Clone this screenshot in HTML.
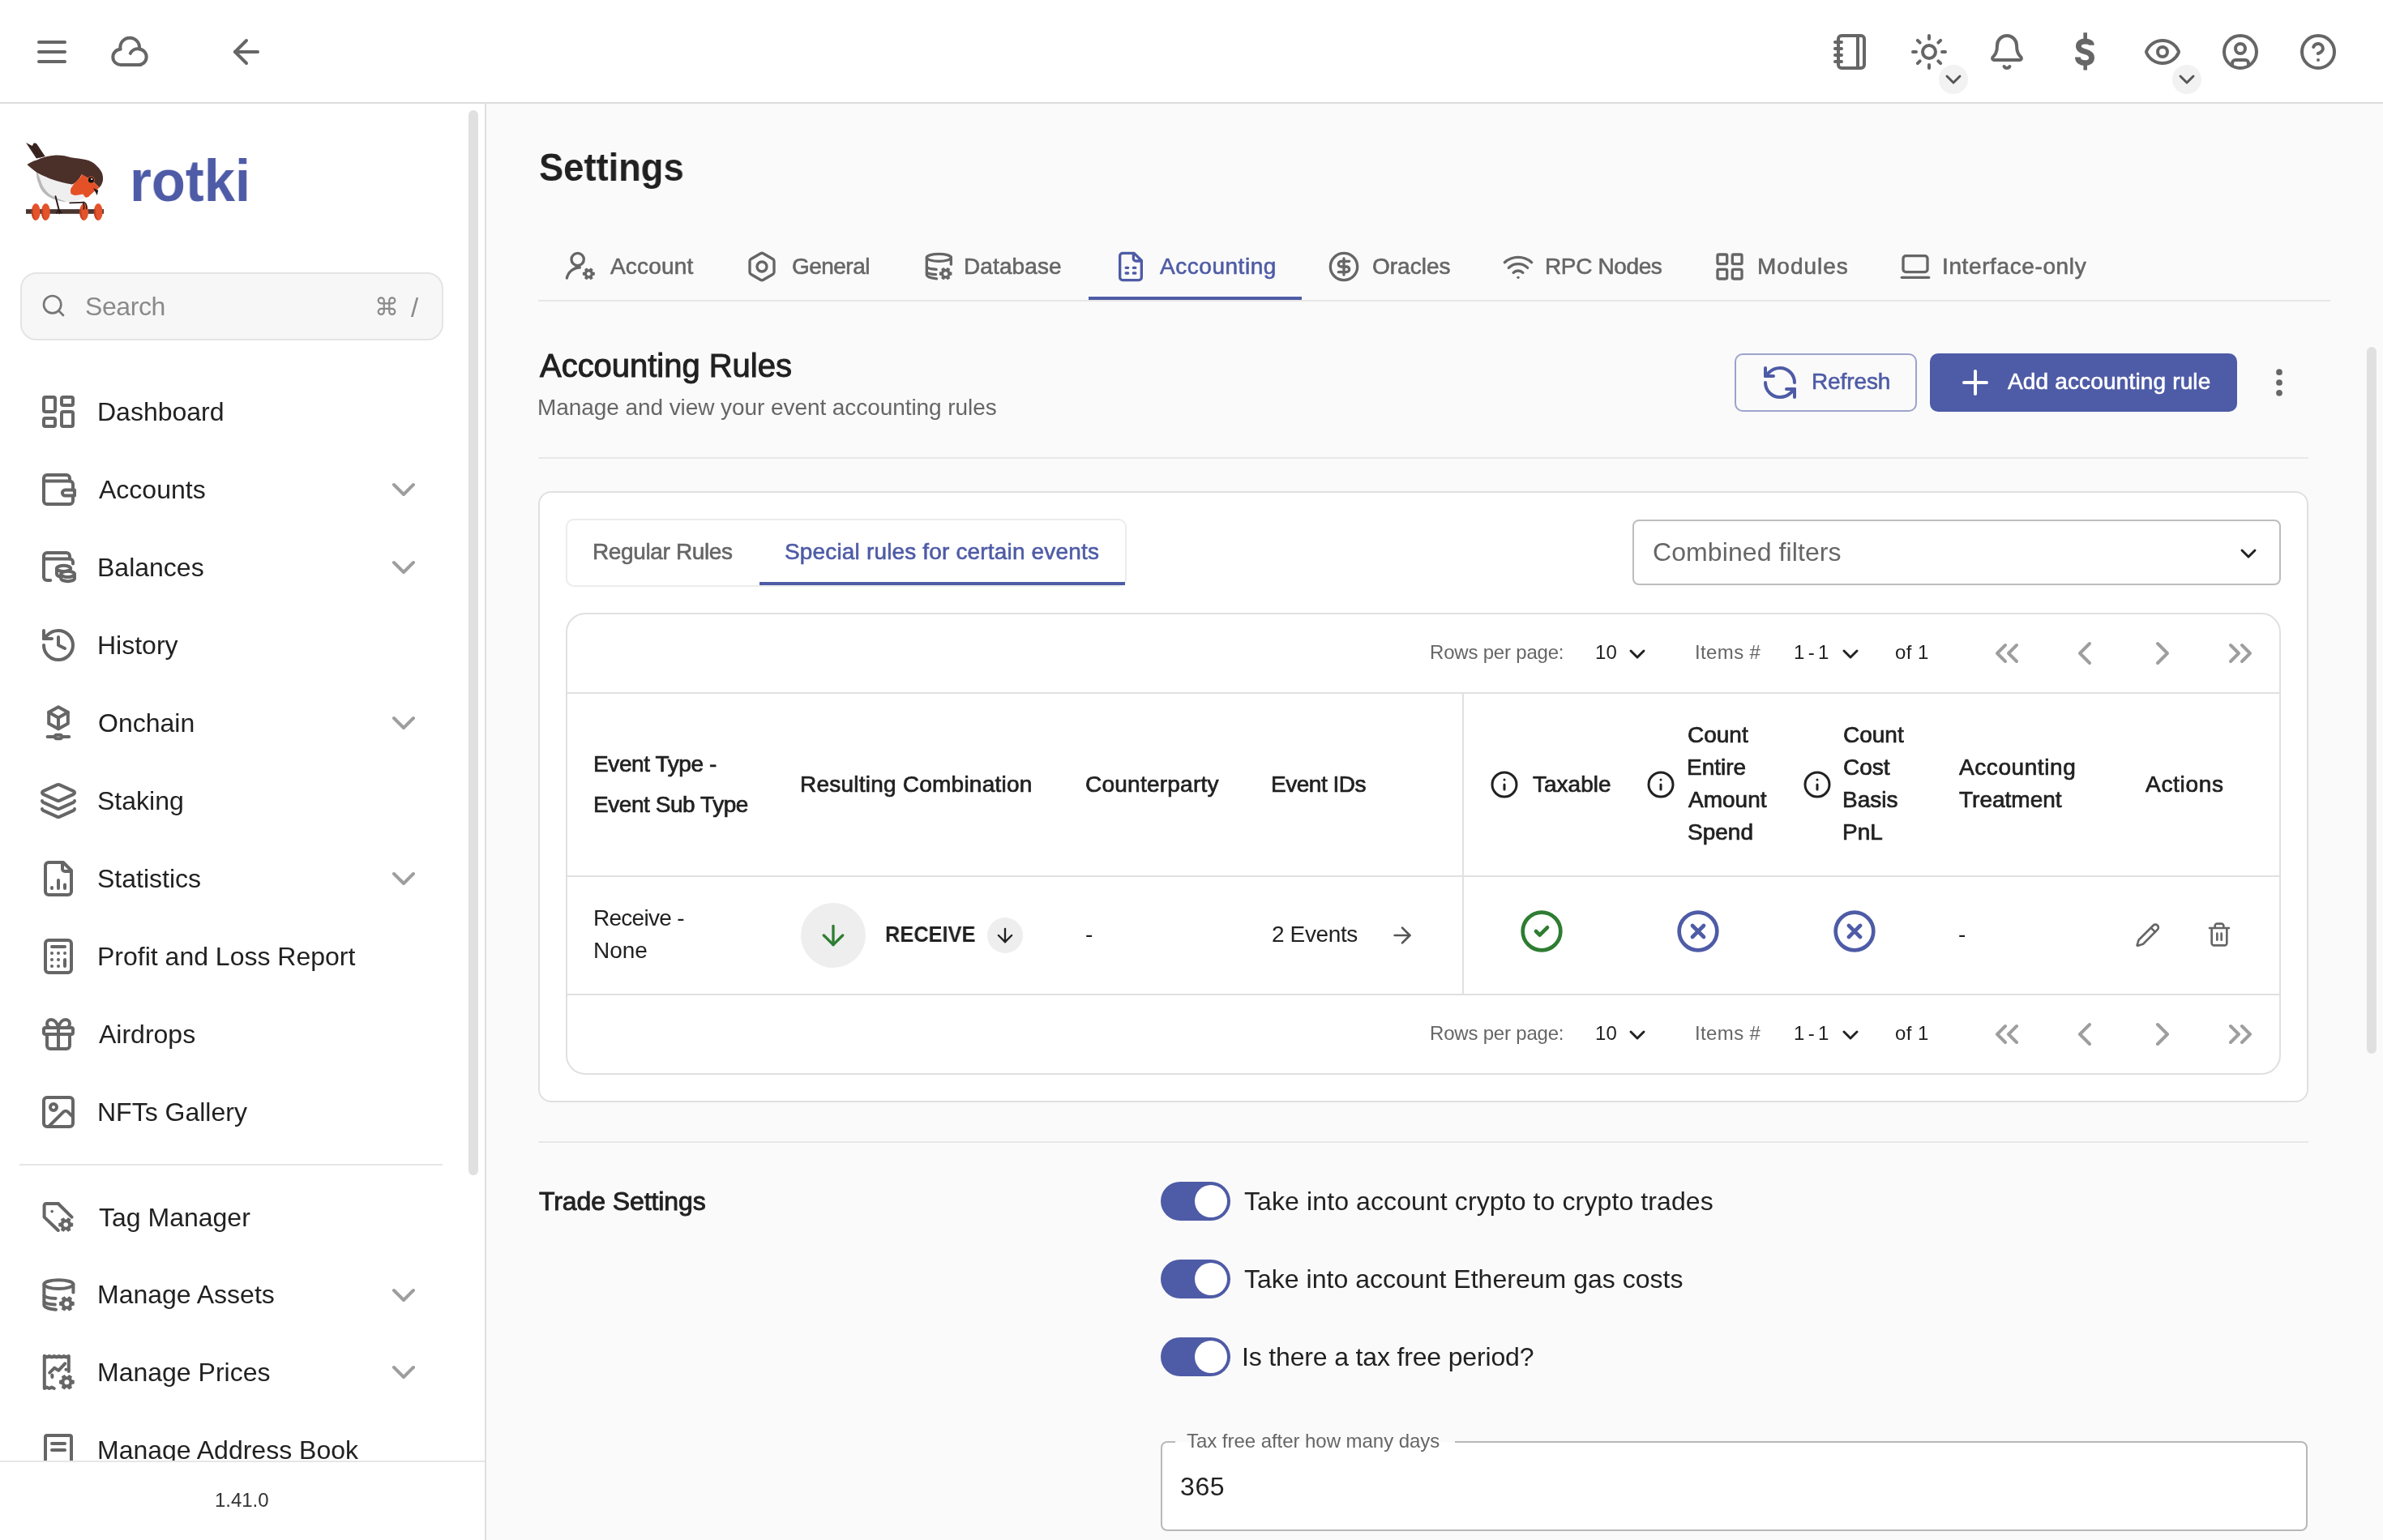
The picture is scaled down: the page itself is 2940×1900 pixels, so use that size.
<!DOCTYPE html>
<html><head><meta charset="utf-8"><title>rotki settings</title>
<style>
html,body{margin:0;padding:0;}
@media (min-width:2000px){html{zoom:2;}}
body{width:1470px;height:950px;overflow:hidden;position:relative;background:#fafafa;font-family:"Liberation Sans",sans-serif;}
.t{position:absolute;white-space:nowrap;line-height:1;will-change:transform;}
</style></head><body>
<div style="position:absolute;left:0px;top:0px;width:1470px;height:63px;background:#fff;"></div>
<div style="position:absolute;left:0px;top:63px;width:1470px;height:1px;background:#dddddd;"></div>
<svg width="24" height="24" viewBox="0 0 24 24" fill="none" stroke="#666" stroke-width="2" stroke-linecap="round" stroke-linejoin="round" style="position:absolute;left:20.00px;top:20.00px;color:#666;"><path d="M4 12h16M4 6h16M4 18h16"/></svg>
<svg width="24" height="24" viewBox="0 0 24 24" fill="none" stroke="#666" stroke-width="2" stroke-linecap="round" stroke-linejoin="round" style="position:absolute;left:68.00px;top:20.00px;color:#666;"><path d="M6.3 10.4A5.9 5.9 0 1 1 17.9 10.2A4.9 4.9 0 0 1 16.9 20H6.6A4.8 4.8 0 0 1 6.3 10.4Z"/><path d="M12.4 12.9A5 5 0 0 1 17.9 10.2"/></svg>
<svg width="24" height="24" viewBox="0 0 24 24" fill="none" stroke="#666" stroke-width="2" stroke-linecap="round" stroke-linejoin="round" style="position:absolute;left:140.00px;top:20.00px;color:#666;"><path d="m12 19-7-7 7-7"/><path d="M19 12H5"/></svg>
<svg width="24" height="24" viewBox="0 0 24 24" fill="none" stroke="#666" stroke-width="2" stroke-linecap="round" stroke-linejoin="round" style="position:absolute;left:1130.00px;top:20.00px;color:#666;"><path d="M2 6h4M2 10h4M2 14h4M2 18h4"/><rect width="16" height="20" x="4" y="2" rx="2"/><path d="M16 2v20"/></svg>
<svg width="24" height="24" viewBox="0 0 24 24" fill="none" stroke="#666" stroke-width="2" stroke-linecap="round" stroke-linejoin="round" style="position:absolute;left:1178.00px;top:20.00px;color:#666;"><circle cx="12" cy="12" r="4"/><path d="M12 2v2M12 20v2M4.93 4.93l1.41 1.41M17.66 17.66l1.41 1.41M2 12h2M20 12h2M6.34 17.66l-1.41 1.41M19.07 4.93l-1.41 1.41"/></svg>
<svg width="24" height="24" viewBox="0 0 24 24" fill="none" stroke="#666" stroke-width="2" stroke-linecap="round" stroke-linejoin="round" style="position:absolute;left:1226.00px;top:20.00px;color:#666;"><path d="M10.268 21a2 2 0 0 0 3.464 0"/><path d="M3.262 15.326A1 1 0 0 0 4 17h16a1 1 0 0 0 .74-1.673C19.41 13.956 18 12.499 18 8A6 6 0 0 0 6 8c0 4.499-1.411 5.956-2.738 7.326"/></svg>
<svg width="24" height="24" viewBox="0 0 24 24" fill="none" stroke="#666" stroke-width="2" stroke-linecap="round" stroke-linejoin="round" style="position:absolute;left:1322.00px;top:20.00px;color:#666;"><path d="M2.062 12.348a1 1 0 0 1 0-.696 10.75 10.75 0 0 1 19.876 0 1 1 0 0 1 0 .696 10.75 10.75 0 0 1-19.876 0"/><circle cx="12" cy="12" r="3"/></svg>
<svg width="24" height="24" viewBox="0 0 24 24" fill="none" stroke="#666" stroke-width="2" stroke-linecap="round" stroke-linejoin="round" style="position:absolute;left:1370.00px;top:20.00px;color:#666;"><circle cx="12" cy="12" r="10"/><circle cx="12" cy="10" r="3"/><path d="M7 20.662V19a2 2 0 0 1 2-2h6a2 2 0 0 1 2 2v1.662"/></svg>
<svg width="24" height="24" viewBox="0 0 24 24" fill="none" stroke="#666" stroke-width="2" stroke-linecap="round" stroke-linejoin="round" style="position:absolute;left:1418.00px;top:20.00px;color:#666;"><circle cx="12" cy="12" r="10"/><path d="M9.09 9a3 3 0 0 1 5.83 1c0 2-3 3-3 3"/><path d="M12 17h.01"/></svg>
<svg width="24" height="24" viewBox="0 0 24 24" fill="none" stroke="#666" stroke-width="2" stroke-linecap="round" stroke-linejoin="round" style="position:absolute;left:1274.00px;top:20.00px;color:#666;"><path d="M16.2 7.9C16.2 6.3 14.5 5.5 12.2 5.5 9.8 5.5 8.2 6.6 8.2 8.5 8.2 10.5 10 11.2 12.3 11.9 14.7 12.6 16.3 13.5 16.3 15.6 16.3 17.6 14.6 18.85 12.2 18.85 9.5 18.85 7.7 17.6 7.7 15.3" stroke-width="3.4" stroke-linecap="butt" stroke-linejoin="miter"/><path d="M12.35 0.1v5M12.35 18.5v4.7" stroke-width="2.3" stroke-linecap="butt"/></svg>
<div style="position:absolute;left:1196px;top:40px;width:18px;height:18px;background:#f2f2f2;border-radius:50%;"></div>
<svg width="16" height="16" viewBox="0 0 24 24" fill="none" stroke="#555" stroke-width="2.2" stroke-linecap="round" stroke-linejoin="round" style="position:absolute;left:1197.00px;top:41.00px;color:#555;"><path d="m6 9 6 6 6-6"/></svg>
<div style="position:absolute;left:1340px;top:40px;width:18px;height:18px;background:#f2f2f2;border-radius:50%;"></div>
<svg width="16" height="16" viewBox="0 0 24 24" fill="none" stroke="#555" stroke-width="2.2" stroke-linecap="round" stroke-linejoin="round" style="position:absolute;left:1341.00px;top:41.00px;color:#555;"><path d="m6 9 6 6 6-6"/></svg>
<div style="position:absolute;left:0px;top:64px;width:299px;height:886px;background:#fff;"></div>
<div style="position:absolute;left:299px;top:64px;width:1px;height:886px;background:#dfdfdf;"></div>
<svg width="48" height="48" viewBox="0 0 96 96" style="position:absolute;left:16px;top:88px">
<path d="M0 0 L7.8 4.1 L9.5 0.7 C11 0.3 12.5 0.8 13.5 1.8 L23.7 16.9 L12.9 19.6 Z" fill="#3a2420"/>
<path d="M7.8 4.1 L17.5 18.5" stroke="#2a1814" stroke-width="0.8"/>
<path d="M12.9 33.8 C13 42 14 47 15.6 50 C17 56 20 60 23 62.8 C27 66.5 30 68 33.8 69.6 C40 72 45 73 50 73 C55 73.2 60 72.5 63.5 71.6 C68 70.5 71 69 73.6 67.6 L70 45 Z" fill="#efefef"/>
<path d="M12.9 33.8 C13 42 14 47 15.6 50 C17 56 20 60 23 62.8 C27 66.5 30 68 33.8 69.6 C40 72 45 73 50 73 C45 71 38 69 33 66 C26 62 21 56 18.5 48 C16.5 42 14.5 37 12.9 33.8 Z" fill="#b9b9b9"/>
<path d="M1.4 27.1 C6 24 10 22 12.9 21.7 C20 18.5 28 16 36.5 15.6 C44 15.3 50 16.5 55.4 18.3 C62 19.5 68 19.8 73.6 21 C80 22.5 84 25 87.2 28.4 C91 32 94 36 94.6 39.9 C95.5 44 95 48 93.9 50 C93 52.5 92 54 90.5 55.4 L83.8 48.7 C80 44 78 43.5 75.7 43.3 C72 41 70 40 68.9 39.2 C66 44 62 50 56.8 51.4 C50 51 40 48 29.8 44.6 C22 41 16 38.5 12.9 36.5 C8 33 4 29.5 1.4 27.1 Z" fill="#4b302a"/>
<path d="M68.9 39.2 C72 40.5 74 42 75.7 43.3 C78 44 80 45.5 83.8 48.7 L90.5 55.4 C89 56.8 88 57.5 87.2 58.1 C83 61 80 64.5 77 66.9 C75.5 67.5 74.5 67.8 73.6 67.6 C72 66 71 64.5 70.3 63.5 C66 64.5 63 65 60.1 64.9 C58 64.5 56.5 64 55.4 62.8 C54.8 60 55 58 55.4 56.8 C57 54 58.5 51.5 60.1 50 C63 47 65.5 44 67.6 41.9 Z" fill="#e45127"/>
<circle cx="80.4" cy="46" r="4.4" fill="#e45127"/>
<circle cx="80.4" cy="46" r="3.5" fill="#111"/>
<circle cx="81.2" cy="45" r="1.1" fill="#fff"/>
<path d="M83.1 56.1 L89.2 58.8 L87.8 64.9 Z" fill="#1a1a1a"/>
<path d="M36.5 66.2 L40.6 82.4" stroke="#2f1f1b" stroke-width="2" fill="none" stroke-linecap="round"/>
<path d="M54.1 74.3 L71.6 73.6" stroke="#2f1f1b" stroke-width="1.7" fill="none" stroke-linecap="round"/>
<rect x="0" y="82.1" width="96" height="5.7" fill="#4a3631"/>
<ellipse cx="12.2" cy="85.5" rx="5.4" ry="10.5" fill="#e4532b"/>
<ellipse cx="24.4" cy="85.5" rx="5.4" ry="10.5" fill="#e4532b"/>
<ellipse cx="71.6" cy="85.5" rx="5.4" ry="10.5" fill="#e4532b"/>
<ellipse cx="89.2" cy="85.5" rx="5.4" ry="10.5" fill="#e4532b"/>
<path d="M7 82 C6.5 90 8.5 95 12.2 96 C9.5 93 8.5 88 9 82Z M19.2 82 C18.7 90 20.7 95 24.4 96 C21.7 93 20.7 88 21.2 82Z M66.4 82 C65.9 90 67.9 95 71.6 96 C68.9 93 67.9 88 68.4 82Z M84 82 C83.5 90 85.5 95 89.2 96 C86.5 93 85.5 88 86 82Z" fill="#bd3f1f"/>
<path d="M40.6 82.4 l-2.8 4.6 M40.6 82.4 l.6 5 M40.6 82.4 l3.2 4.4 M71.6 73.6 C74 74.5 75.3 77.5 74.6 81.5 M70.6 74.2 C72 77 72 79.5 71.2 82" stroke="#2a1a17" stroke-width="1.5" fill="none" stroke-linecap="round"/>
</svg>
<div style="position:absolute;left:12.5px;top:168px;width:261px;height:42px;box-sizing:border-box;background:#f7f7f7;border:1px solid #e4e4e4;border-radius:10px;"></div>
<svg width="16" height="16" viewBox="0 0 24 24" fill="none" stroke="#777" stroke-width="2" stroke-linecap="round" stroke-linejoin="round" style="position:absolute;left:25.00px;top:180.70px;color:#777;"><circle cx="11" cy="11" r="8"/><path d="m21 21-4.3-4.3"/></svg>
<div style="position:absolute;left:289px;top:68px;width:6px;height:657px;background:#e0e0e0;border-radius:3px;"></div>
<svg width="24" height="24" viewBox="0 0 24 24" fill="none" stroke="#666" stroke-width="2" stroke-linecap="round" stroke-linejoin="round" style="position:absolute;left:24.00px;top:242.00px;color:#666;"><rect width="7" height="9" x="3" y="3" rx="1"/><rect width="7" height="5" x="14" y="3" rx="1"/><rect width="7" height="9" x="14" y="12" rx="1"/><rect width="7" height="5" x="3" y="16" rx="1"/></svg>
<svg width="24" height="24" viewBox="0 0 24 24" fill="none" stroke="#666" stroke-width="2" stroke-linecap="round" stroke-linejoin="round" style="position:absolute;left:24.00px;top:290.00px;color:#666;"><path d="M3 6.7h16a2 2 0 0 1 2 2v3.6"/><path d="M21 15.8V19a2 2 0 0 1-2 2H5a2 2 0 0 1-2-2V5a2 2 0 0 1 2-2h12a2 2 0 0 1 2 2v1.7"/><path d="M16.2 12.3H22v3.5h-5.8a1.75 1.75 0 0 1 0-3.5z"/></svg>
<svg width="24" height="24" viewBox="0 0 24 24" fill="none" stroke="#9e9e9e" stroke-width="2" stroke-linecap="round" stroke-linejoin="round" style="position:absolute;left:237.00px;top:289.90px;color:#9e9e9e;"><path d="m6 9 6 6 6-6"/></svg>
<svg width="24" height="24" viewBox="0 0 24 24" fill="none" stroke="#666" stroke-width="2" stroke-linecap="round" stroke-linejoin="round" style="position:absolute;left:24.00px;top:338.00px;color:#666;"><path d="M3 6.7h16a2 2 0 0 1 2 2v1.1"/><path d="M19 6.7V5a2 2 0 0 0-2-2H5a2 2 0 0 0-2 2v13a2 2 0 0 0 2 2h2.1"/><ellipse cx="15.3" cy="12.7" rx="4.3" ry="1.8"/><path d="M11 12.7v3.3c0 .9 1.1 1.6 2.6 1.8"/><ellipse cx="17.8" cy="16.2" rx="4.2" ry="1.8"/><path d="M13.6 16.2v2.6c0 1.1 1.9 1.8 4.2 1.8s4.2-.7 4.2-1.8v-2.6"/></svg>
<svg width="24" height="24" viewBox="0 0 24 24" fill="none" stroke="#9e9e9e" stroke-width="2" stroke-linecap="round" stroke-linejoin="round" style="position:absolute;left:237.00px;top:337.90px;color:#9e9e9e;"><path d="m6 9 6 6 6-6"/></svg>
<svg width="24" height="24" viewBox="0 0 24 24" fill="none" stroke="#666" stroke-width="2" stroke-linecap="round" stroke-linejoin="round" style="position:absolute;left:24.00px;top:386.00px;color:#666;"><path d="M3 12a9 9 0 1 0 9-9 9.75 9.75 0 0 0-6.74 2.74L3 8"/><path d="M3 3v5h5"/><path d="M12 7v5l4 2"/></svg>
<svg width="24" height="24" viewBox="0 0 24 24" fill="none" stroke="#666" stroke-width="2" stroke-linecap="round" stroke-linejoin="round" style="position:absolute;left:24.00px;top:434.00px;color:#666;"><path d="M12 2.1 17.9 5.4v7L12 15.6 6.1 12.4v-7z"/><path d="M6.1 5.4 12 8.8l5.9-3.4M12 8.8v6.8"/><path d="M5.3 20.5H9.8M14.2 20.5H18.6"/><rect x="9.8" y="19.4" width="4.4" height="2.2" rx="1.1"/></svg>
<svg width="24" height="24" viewBox="0 0 24 24" fill="none" stroke="#9e9e9e" stroke-width="2" stroke-linecap="round" stroke-linejoin="round" style="position:absolute;left:237.00px;top:433.90px;color:#9e9e9e;"><path d="m6 9 6 6 6-6"/></svg>
<svg width="24" height="24" viewBox="0 0 24 24" fill="none" stroke="#666" stroke-width="2" stroke-linecap="round" stroke-linejoin="round" style="position:absolute;left:24.00px;top:482.00px;color:#666;"><path d="M12.83 2.18a2 2 0 0 0-1.66 0L2.6 6.08a1 1 0 0 0 0 1.83l8.58 3.91a2 2 0 0 0 1.66 0l8.58-3.9a1 1 0 0 0 0-1.83Z"/><path d="M2 12a1 1 0 0 0 .58.91l8.6 3.91a2 2 0 0 0 1.65 0l8.58-3.9A1 1 0 0 0 22 12"/><path d="M2 17a1 1 0 0 0 .58.91l8.6 3.91a2 2 0 0 0 1.65 0l8.58-3.9A1 1 0 0 0 22 17"/></svg>
<svg width="24" height="24" viewBox="0 0 24 24" fill="none" stroke="#666" stroke-width="2" stroke-linecap="round" stroke-linejoin="round" style="position:absolute;left:24.00px;top:530.00px;color:#666;"><path d="M15 2H6a2 2 0 0 0-2 2v16a2 2 0 0 0 2 2h12a2 2 0 0 0 2-2V7Z"/><path d="M14.5 2.5V6a1.5 1.5 0 0 0 1.5 1.5h3.5"/><path d="M8 18v-.5M12 18v-5M16 18v-2.3"/></svg>
<svg width="24" height="24" viewBox="0 0 24 24" fill="none" stroke="#9e9e9e" stroke-width="2" stroke-linecap="round" stroke-linejoin="round" style="position:absolute;left:237.00px;top:529.90px;color:#9e9e9e;"><path d="m6 9 6 6 6-6"/></svg>
<svg width="24" height="24" viewBox="0 0 24 24" fill="none" stroke="#666" stroke-width="2" stroke-linecap="round" stroke-linejoin="round" style="position:absolute;left:24.00px;top:578.00px;color:#666;"><rect width="16" height="20" x="4" y="2" rx="2"/><path d="M8 6h8M16 14v4M16 10h.01M12 10h.01M8 10h.01M12 14h.01M8 14h.01M12 18h.01M8 18h.01"/></svg>
<svg width="24" height="24" viewBox="0 0 24 24" fill="none" stroke="#666" stroke-width="2" stroke-linecap="round" stroke-linejoin="round" style="position:absolute;left:24.00px;top:626.00px;color:#666;"><rect x="3" y="8" width="18" height="4" rx="1"/><path d="M12 8v13"/><path d="M19 12v7a2 2 0 0 1-2 2H7a2 2 0 0 1-2-2v-7"/><path d="M7.5 8a2.5 2.5 0 0 1 0-5A4.8 8 0 0 1 12 8a4.8 8 0 0 1 4.5-5 2.5 2.5 0 0 1 0 5"/></svg>
<svg width="24" height="24" viewBox="0 0 24 24" fill="none" stroke="#666" stroke-width="2" stroke-linecap="round" stroke-linejoin="round" style="position:absolute;left:24.00px;top:674.00px;color:#666;"><rect width="18" height="18" x="3" y="3" rx="2"/><circle cx="9" cy="9" r="2"/><path d="m21 15-3.086-3.086a2 2 0 0 0-2.828 0L6 21"/></svg>
<div style="position:absolute;left:12px;top:718px;width:261px;height:1px;background:#e6e6e6;"></div>
<svg width="24" height="24" viewBox="0 0 24 24" fill="none" stroke="#666" stroke-width="2" stroke-linecap="round" stroke-linejoin="round" style="position:absolute;left:24.00px;top:739.40px;color:#666;"><path d="M11.9 3H4.5A1.2 1.2 0 0 0 3.3 4.2v7.1l8.6 8.2"/><path d="M11.9 3l8.4 8.3"/><circle cx="8.1" cy="7.8" r=".9" fill="currentColor" stroke="none"/><path d="M19.61 14.66 L21.08 14.97 L21.08 17.03 L19.61 17.34 L19.27 17.94 L19.74 19.36 L17.94 20.40 L16.94 19.28 L16.26 19.28 L15.26 20.40 L13.46 19.36 L13.93 17.94 L13.59 17.34 L12.12 17.03 L12.12 14.97 L13.59 14.66 L13.93 14.06 L13.46 12.64 L15.26 11.60 L16.26 12.72 L16.94 12.72 L17.94 11.60 L19.74 12.64 L19.27 14.06Z M18.00 16.00 A1.4 1.4 0 1 0 15.20 16.00 A1.4 1.4 0 1 0 18.00 16.00Z" fill="currentColor" fill-rule="evenodd" stroke="none"/></svg>
<svg width="24" height="24" viewBox="0 0 24 24" fill="none" stroke="#666" stroke-width="2" stroke-linecap="round" stroke-linejoin="round" style="position:absolute;left:24.00px;top:786.90px;color:#666;"><ellipse cx="12.2" cy="5.3" rx="9" ry="2.7"/><path d="M21.2 5.3v5"/><path d="M3.2 5.3V18c0 1.4 3 2.5 7.3 2.9"/><path d="M3.3 12.3c.6 .8 3.2 1.5 7 1.7"/><path d="M3.3 16.2c.6 .8 3.2 1.4 6.6 1.6"/><path d="M20.40 15.78 L21.88 16.12 L21.88 18.28 L20.40 18.62 L20.03 19.26 L20.47 20.71 L18.60 21.79 L17.57 20.68 L16.83 20.68 L15.80 21.79 L13.93 20.71 L14.37 19.26 L14.00 18.62 L12.52 18.28 L12.52 16.12 L14.00 15.78 L14.37 15.14 L13.93 13.69 L15.80 12.61 L16.83 13.72 L17.57 13.72 L18.60 12.61 L20.47 13.69 L20.03 15.14Z M18.70 17.20 A1.5 1.5 0 1 0 15.70 17.20 A1.5 1.5 0 1 0 18.70 17.20Z" fill="currentColor" fill-rule="evenodd" stroke="none"/></svg>
<svg width="24" height="24" viewBox="0 0 24 24" fill="none" stroke="#9e9e9e" stroke-width="2" stroke-linecap="round" stroke-linejoin="round" style="position:absolute;left:237.00px;top:786.80px;color:#9e9e9e;"><path d="m6 9 6 6 6-6"/></svg>
<svg width="24" height="24" viewBox="0 0 24 24" fill="none" stroke="#666" stroke-width="2" stroke-linecap="round" stroke-linejoin="round" style="position:absolute;left:24.00px;top:834.60px;color:#666;"><path d="M3.4 2v20l1.5-.7 1.5.7 1.5-.7 1.5.7"/><path d="M3.4 2l1.5.7 1.5-.7 1.5.7 1.5-.7 1.5.7 1.5-.7 1.5.7 1.5-.7 1.5.7 1.5-.7V11.5"/><path d="m6.6 12.3 3-3 2.5 1.6 4-4.2"/><path d="M16.7 10.4h.01M8.2 13.8v1.2"/><path d="M20.40 16.68 L21.88 17.02 L21.88 19.18 L20.40 19.52 L20.03 20.16 L20.47 21.61 L18.60 22.69 L17.57 21.58 L16.83 21.58 L15.80 22.69 L13.93 21.61 L14.37 20.16 L14.00 19.52 L12.52 19.18 L12.52 17.02 L14.00 16.68 L14.37 16.04 L13.93 14.59 L15.80 13.51 L16.83 14.62 L17.57 14.62 L18.60 13.51 L20.47 14.59 L20.03 16.04Z M18.70 18.10 A1.5 1.5 0 1 0 15.70 18.10 A1.5 1.5 0 1 0 18.70 18.10Z" fill="currentColor" fill-rule="evenodd" stroke="none"/></svg>
<svg width="24" height="24" viewBox="0 0 24 24" fill="none" stroke="#9e9e9e" stroke-width="2" stroke-linecap="round" stroke-linejoin="round" style="position:absolute;left:237.00px;top:834.50px;color:#9e9e9e;"><path d="m6 9 6 6 6-6"/></svg>
<svg width="24" height="24" viewBox="0 0 24 24" fill="none" stroke="#666" stroke-width="2" stroke-linecap="round" stroke-linejoin="round" style="position:absolute;left:24.00px;top:882.60px;color:#666;"><rect x="4" y="3" width="16" height="19" rx="1"/><path d="M8 8h8M8 12h8"/></svg>
<div style="position:absolute;left:0px;top:901px;width:299px;height:49px;background:#fff;border-top:1px solid #e6e6e6;box-sizing:border-box;z-index:5;"></div>
<div style="position:absolute;left:300px;top:64px;width:1170px;height:886px;background:#fafafa;"></div>
<div style="position:absolute;left:1460px;top:214px;width:6px;height:436px;background:#e0e0e0;border-radius:3px;"></div>
<div style="position:absolute;left:332px;top:185px;width:1105.5px;height:1px;background:#e6e6e6;"></div>
<div style="position:absolute;left:671.5px;top:183px;width:131.5px;height:2px;background:#4e5ba6;"></div>
<svg width="20" height="20" viewBox="0 0 24 24" fill="none" stroke="#666666" stroke-width="2" stroke-linecap="round" stroke-linejoin="round" style="position:absolute;left:348.00px;top:154.50px;color:#666666;"><circle cx="10" cy="6.6" r="4.6"/><path d="M2 20.5A10 10 0 0 1 11.6 12.6"/><path d="M21.21 15.96 L22.68 16.27 L22.68 18.33 L21.21 18.64 L20.87 19.24 L21.34 20.66 L19.54 21.70 L18.54 20.58 L17.86 20.58 L16.86 21.70 L15.06 20.66 L15.53 19.24 L15.19 18.64 L13.72 18.33 L13.72 16.27 L15.19 15.96 L15.53 15.36 L15.06 13.94 L16.86 12.90 L17.86 14.02 L18.54 14.02 L19.54 12.90 L21.34 13.94 L20.87 15.36Z M19.60 17.30 A1.4 1.4 0 1 0 16.80 17.30 A1.4 1.4 0 1 0 19.60 17.30Z" fill="currentColor" fill-rule="evenodd" stroke="none"/></svg>
<svg width="20" height="20" viewBox="0 0 24 24" fill="none" stroke="#666666" stroke-width="2" stroke-linecap="round" stroke-linejoin="round" style="position:absolute;left:460.00px;top:154.50px;color:#666666;"><path d="M21 16V8a2 2 0 0 0-1-1.73l-7-4a2 2 0 0 0-2 0l-7 4A2 2 0 0 0 3 8v8a2 2 0 0 0 1 1.73l7 4a2 2 0 0 0 2 0l7-4A2 2 0 0 0 21 16z"/><circle cx="12" cy="12" r="3.6"/></svg>
<svg width="20" height="20" viewBox="0 0 24 24" fill="none" stroke="#666666" stroke-width="2" stroke-linecap="round" stroke-linejoin="round" style="position:absolute;left:569.00px;top:154.50px;color:#666666;"><ellipse cx="12.2" cy="5.3" rx="9" ry="2.7"/><path d="M21.2 5.3v5"/><path d="M3.2 5.3V18c0 1.4 3 2.5 7.3 2.9"/><path d="M3.3 12.3c.6 .8 3.2 1.5 7 1.7"/><path d="M3.3 16.2c.6 .8 3.2 1.4 6.6 1.6"/><path d="M20.40 15.78 L21.88 16.12 L21.88 18.28 L20.40 18.62 L20.03 19.26 L20.47 20.71 L18.60 21.79 L17.57 20.68 L16.83 20.68 L15.80 21.79 L13.93 20.71 L14.37 19.26 L14.00 18.62 L12.52 18.28 L12.52 16.12 L14.00 15.78 L14.37 15.14 L13.93 13.69 L15.80 12.61 L16.83 13.72 L17.57 13.72 L18.60 12.61 L20.47 13.69 L20.03 15.14Z M18.70 17.20 A1.5 1.5 0 1 0 15.70 17.20 A1.5 1.5 0 1 0 18.70 17.20Z" fill="currentColor" fill-rule="evenodd" stroke="none"/></svg>
<svg width="20" height="20" viewBox="0 0 24 24" fill="none" stroke="#4e5ba6" stroke-width="2" stroke-linecap="round" stroke-linejoin="round" style="position:absolute;left:687.50px;top:154.50px;color:#4e5ba6;"><path d="M14.5 2H6a2 2 0 0 0-2 2v16a2 2 0 0 0 2 2h12a2 2 0 0 0 2-2V7.5Z"/><path d="M14 2.3v3.7a1.8 1.8 0 0 0 1.8 1.8h4"/><path d="M8.5 12.8h1.5M14 12.8h1.5M8.5 16.8h1.5M14 16.8h1.5"/></svg>
<svg width="20" height="20" viewBox="0 0 24 24" fill="none" stroke="#666666" stroke-width="2" stroke-linecap="round" stroke-linejoin="round" style="position:absolute;left:819.00px;top:154.50px;color:#666666;"><circle cx="12" cy="12" r="10"/><path d="M16 8h-6a2 2 0 1 0 0 4h4a2 2 0 1 1 0 4H8"/><path d="M12 18V6"/></svg>
<svg width="20" height="20" viewBox="0 0 24 24" fill="none" stroke="#666666" stroke-width="2" stroke-linecap="round" stroke-linejoin="round" style="position:absolute;left:926.50px;top:154.50px;color:#666666;"><path d="M12 20h.01"/><path d="M2 8.82a15 15 0 0 1 20 0"/><path d="M5 12.859a10 10 0 0 1 14 0"/><path d="M8.5 16.429a5 5 0 0 1 7 0"/></svg>
<svg width="20" height="20" viewBox="0 0 24 24" fill="none" stroke="#666666" stroke-width="2" stroke-linecap="round" stroke-linejoin="round" style="position:absolute;left:1057.00px;top:154.50px;color:#666666;"><rect width="7" height="7" x="3" y="3" rx="1"/><rect width="7" height="7" x="14" y="3" rx="1"/><rect width="7" height="7" x="14" y="14" rx="1"/><rect width="7" height="7" x="3" y="14" rx="1"/></svg>
<svg width="20" height="20" viewBox="0 0 24 24" fill="none" stroke="#666666" stroke-width="2" stroke-linecap="round" stroke-linejoin="round" style="position:absolute;left:1171.50px;top:154.50px;color:#666666;"><rect width="18" height="12" x="3" y="4" rx="2"/><path d="M2 20h20"/></svg>
<div style="position:absolute;left:1070px;top:218px;width:112.4px;height:36px;box-sizing:border-box;border:1px solid rgba(78,91,166,0.55);border-radius:5px;"></div>
<svg width="24" height="24" viewBox="0 0 24 24" fill="none" stroke="#4e5ba6" stroke-width="2" stroke-linecap="round" stroke-linejoin="round" style="position:absolute;left:1086.00px;top:224.00px;color:#4e5ba6;"><path d="M21 12a9 9 0 0 0-9-9 9.75 9.75 0 0 0-6.74 2.74L3 8"/><path d="M3 3v5h5"/><path d="M3 12a9 9 0 0 0 9 9 9.75 9.75 0 0 0 6.74-2.74L21 16"/><path d="M16 16h5v5"/></svg>
<div style="position:absolute;left:1190.5px;top:218px;width:189.5px;height:36px;background:#4e5ba6;border-radius:5px;"></div>
<svg width="24" height="24" viewBox="0 0 24 24" fill="none" stroke="#fff" stroke-width="2" stroke-linecap="round" stroke-linejoin="round" style="position:absolute;left:1206.50px;top:224.00px;color:#fff;"><path d="M5 12h14M12 5v14"/></svg>
<svg width="22" height="22" viewBox="0 0 24 24" fill="none" stroke="#666" stroke-width="2.2" stroke-linecap="round" stroke-linejoin="round" style="position:absolute;left:1395.00px;top:225.00px;color:#666;"><circle cx="12" cy="12" r="1"/><circle cx="12" cy="5" r="1"/><circle cx="12" cy="19" r="1"/></svg>
<div style="position:absolute;left:332px;top:282px;width:1092px;height:1px;background:#e8e8e8;"></div>
<div style="position:absolute;left:332px;top:303px;width:1092px;height:377px;box-sizing:border-box;background:#fff;border:1px solid #e0e0e0;border-radius:8px;"></div>
<div style="position:absolute;left:349px;top:320px;width:346px;height:42px;box-sizing:border-box;border:1px solid #ececec;border-radius:5px;"></div>
<div style="position:absolute;left:468.5px;top:359px;width:225.5px;height:2px;background:#4e5ba6;"></div>
<div style="position:absolute;left:1007px;top:320.5px;width:400px;height:40.5px;box-sizing:border-box;background:#fff;border:1px solid #bdbdbd;border-radius:4px;"></div>
<svg width="16" height="16" viewBox="0 0 24 24" fill="none" stroke="#212121" stroke-width="2.2" stroke-linecap="round" stroke-linejoin="round" style="position:absolute;left:1379.00px;top:333.50px;color:#212121;"><path d="m6 9 6 6 6-6"/></svg>
<div style="position:absolute;left:349px;top:378px;width:1058px;height:285px;box-sizing:border-box;background:#fff;border:1px solid #e0e0e0;border-radius:12px;"></div>
<svg width="16" height="16" viewBox="0 0 24 24" fill="none" stroke="#212121" stroke-width="2.2" stroke-linecap="round" stroke-linejoin="round" style="position:absolute;left:1002.00px;top:395.50px;color:#212121;"><path d="m6 9 6 6 6-6"/></svg>
<svg width="16" height="16" viewBox="0 0 24 24" fill="none" stroke="#212121" stroke-width="2.2" stroke-linecap="round" stroke-linejoin="round" style="position:absolute;left:1133.50px;top:395.50px;color:#212121;"><path d="m6 9 6 6 6-6"/></svg>
<svg width="24" height="24" viewBox="0 0 24 24" fill="none" stroke="#9e9e9e" stroke-width="2" stroke-linecap="round" stroke-linejoin="round" style="position:absolute;left:1226.00px;top:391.00px;color:#9e9e9e;"><path d="m11 17-5-5 5-5"/><path d="m18 17-5-5 5-5"/></svg>
<svg width="24" height="24" viewBox="0 0 24 24" fill="none" stroke="#9e9e9e" stroke-width="2" stroke-linecap="round" stroke-linejoin="round" style="position:absolute;left:1274.00px;top:391.00px;color:#9e9e9e;"><path d="m15 18-6-6 6-6"/></svg>
<svg width="24" height="24" viewBox="0 0 24 24" fill="none" stroke="#9e9e9e" stroke-width="2" stroke-linecap="round" stroke-linejoin="round" style="position:absolute;left:1322.00px;top:391.00px;color:#9e9e9e;"><path d="m9 18 6-6-6-6"/></svg>
<svg width="24" height="24" viewBox="0 0 24 24" fill="none" stroke="#9e9e9e" stroke-width="2" stroke-linecap="round" stroke-linejoin="round" style="position:absolute;left:1370.00px;top:391.00px;color:#9e9e9e;"><path d="m6 17 5-5-5-5"/><path d="m13 17 5-5-5-5"/></svg>
<div style="position:absolute;left:350px;top:427px;width:1056px;height:1px;background:#e0e0e0;"></div>
<div style="position:absolute;left:350px;top:540px;width:1056px;height:1px;background:#e0e0e0;"></div>
<div style="position:absolute;left:350px;top:613px;width:1056px;height:1px;background:#e0e0e0;"></div>
<div style="position:absolute;left:902px;top:428px;width:1px;height:185px;background:#e0e0e0;"></div>
<svg width="16" height="16" viewBox="0 0 24 24" fill="none" stroke="#212121" stroke-width="2.2" stroke-linecap="round" stroke-linejoin="round" style="position:absolute;left:1002.00px;top:630.50px;color:#212121;"><path d="m6 9 6 6 6-6"/></svg>
<svg width="16" height="16" viewBox="0 0 24 24" fill="none" stroke="#212121" stroke-width="2.2" stroke-linecap="round" stroke-linejoin="round" style="position:absolute;left:1133.50px;top:630.50px;color:#212121;"><path d="m6 9 6 6 6-6"/></svg>
<svg width="24" height="24" viewBox="0 0 24 24" fill="none" stroke="#9e9e9e" stroke-width="2" stroke-linecap="round" stroke-linejoin="round" style="position:absolute;left:1226.00px;top:626.00px;color:#9e9e9e;"><path d="m11 17-5-5 5-5"/><path d="m18 17-5-5 5-5"/></svg>
<svg width="24" height="24" viewBox="0 0 24 24" fill="none" stroke="#9e9e9e" stroke-width="2" stroke-linecap="round" stroke-linejoin="round" style="position:absolute;left:1274.00px;top:626.00px;color:#9e9e9e;"><path d="m15 18-6-6 6-6"/></svg>
<svg width="24" height="24" viewBox="0 0 24 24" fill="none" stroke="#9e9e9e" stroke-width="2" stroke-linecap="round" stroke-linejoin="round" style="position:absolute;left:1322.00px;top:626.00px;color:#9e9e9e;"><path d="m9 18 6-6-6-6"/></svg>
<svg width="24" height="24" viewBox="0 0 24 24" fill="none" stroke="#9e9e9e" stroke-width="2" stroke-linecap="round" stroke-linejoin="round" style="position:absolute;left:1370.00px;top:626.00px;color:#9e9e9e;"><path d="m6 17 5-5-5-5"/><path d="m13 17 5-5-5-5"/></svg>
<svg width="18" height="18" viewBox="0 0 24 24" fill="none" stroke="#212121" stroke-width="2" stroke-linecap="round" stroke-linejoin="round" style="position:absolute;left:919.00px;top:474.80px;color:#212121;"><circle cx="12" cy="12" r="10"/><path d="M12 16v-4M12 8h.01"/></svg>
<svg width="18" height="18" viewBox="0 0 24 24" fill="none" stroke="#212121" stroke-width="2" stroke-linecap="round" stroke-linejoin="round" style="position:absolute;left:1015.60px;top:474.80px;color:#212121;"><circle cx="12" cy="12" r="10"/><path d="M12 16v-4M12 8h.01"/></svg>
<svg width="18" height="18" viewBox="0 0 24 24" fill="none" stroke="#212121" stroke-width="2" stroke-linecap="round" stroke-linejoin="round" style="position:absolute;left:1112.00px;top:474.80px;color:#212121;"><circle cx="12" cy="12" r="10"/><path d="M12 16v-4M12 8h.01"/></svg>
<div style="position:absolute;left:494px;top:557px;width:40px;height:40px;background:#eeeeee;border-radius:50%;"></div>
<svg width="20" height="20" viewBox="0 0 24 24" fill="none" stroke="#2e7d32" stroke-width="2" stroke-linecap="round" stroke-linejoin="round" style="position:absolute;left:504.00px;top:567.00px;color:#2e7d32;"><path d="M12 5v14"/><path d="m19 12-7 7-7-7"/></svg>
<div style="position:absolute;left:609px;top:566px;width:22px;height:22px;background:#eeeeee;border-radius:50%;"></div>
<svg width="14" height="14" viewBox="0 0 24 24" fill="none" stroke="#212121" stroke-width="2" stroke-linecap="round" stroke-linejoin="round" style="position:absolute;left:613.00px;top:570.00px;color:#212121;"><path d="M12 5v14"/><path d="m19 12-7 7-7-7"/></svg>
<svg width="16" height="16" viewBox="0 0 24 24" fill="none" stroke="#555" stroke-width="2" stroke-linecap="round" stroke-linejoin="round" style="position:absolute;left:857.00px;top:569.00px;color:#555;"><path d="M5 12h14"/><path d="m12 5 7 7-7 7"/></svg>
<svg width="28" height="28" viewBox="0 0 24 24" fill="none" stroke="#2e7d32" stroke-width="2" stroke-linecap="round" stroke-linejoin="round" style="position:absolute;left:936.90px;top:560.35px;color:#2e7d32;"><circle cx="12" cy="12" r="10"/><path d="m9 12 2 2 4-4"/></svg>
<svg width="28" height="28" viewBox="0 0 24 24" fill="none" stroke="#4e5ba6" stroke-width="2" stroke-linecap="round" stroke-linejoin="round" style="position:absolute;left:1033.50px;top:560.35px;color:#4e5ba6;"><circle cx="12" cy="12" r="10"/><path d="m15 9-6 6M9 9l6 6"/></svg>
<svg width="28" height="28" viewBox="0 0 24 24" fill="none" stroke="#4e5ba6" stroke-width="2" stroke-linecap="round" stroke-linejoin="round" style="position:absolute;left:1130.00px;top:560.35px;color:#4e5ba6;"><circle cx="12" cy="12" r="10"/><path d="m15 9-6 6M9 9l6 6"/></svg>
<svg width="15.75" height="15.75" viewBox="0 0 24 24" fill="none" stroke="#666" stroke-width="2" stroke-linecap="round" stroke-linejoin="round" style="position:absolute;left:1317.03px;top:569.02px;color:#666;"><path d="M21.174 6.812a1 1 0 0 0-3.986-3.987L3.842 16.174a2 2 0 0 0-.5.83l-1.321 4.352a.5.5 0 0 0 .623.622l4.353-1.32a2 2 0 0 0 .83-.497z"/><path d="m15 5 4 4"/></svg>
<svg width="16" height="16" viewBox="0 0 24 24" fill="none" stroke="#666" stroke-width="2" stroke-linecap="round" stroke-linejoin="round" style="position:absolute;left:1360.90px;top:568.70px;color:#666;"><path d="M3 6h18M19 6v14c0 1-1 2-2 2H7c-1 0-2-1-2-2V6M8 6V4c0-1 1-2 2-2h4c1 0 2 1 2 2v2M10 11v6M14 11v6"/></svg>
<div style="position:absolute;left:332px;top:704px;width:1092px;height:1px;background:#e8e8e8;"></div>
<div style="position:absolute;left:716px;top:729px;width:43px;height:24px;background:#4e5ba6;border-radius:12px;"></div>
<div style="position:absolute;left:737px;top:731px;width:20px;height:20px;background:#fff;border-radius:50%;"></div>
<div style="position:absolute;left:716px;top:777px;width:43px;height:24px;background:#4e5ba6;border-radius:12px;"></div>
<div style="position:absolute;left:737px;top:779px;width:20px;height:20px;background:#fff;border-radius:50%;"></div>
<div style="position:absolute;left:716px;top:825px;width:43px;height:24px;background:#4e5ba6;border-radius:12px;"></div>
<div style="position:absolute;left:737px;top:827px;width:20px;height:20px;background:#fff;border-radius:50%;"></div>
<div style="position:absolute;left:716px;top:889px;width:707.5px;height:55.6px;box-sizing:border-box;background:#fff;border:1px solid #b8b8b8;border-radius:4px;"></div>
<div style="position:absolute;left:725px;top:886px;width:172.6px;height:5px;background:#fafafa;"></div>
<div style="position:absolute;left:725px;top:889.6px;width:172.6px;height:3px;background:#fff;"></div>
<span class="t" style="left:79.89px;top:93.32px;font-size:36px;font-weight:700;color:#4e5ba6;transform:scaleX(0.9551);transform-origin:0 0;">rotki</span>
<span class="t" style="left:52.50px;top:180.93px;font-size:16px;font-weight:400;color:#8a8a8a;letter-spacing:-0.200px;">Search</span>
<span class="t" style="left:231.10px;top:182.08px;font-size:15px;font-weight:400;color:#8a8a8a;">⌘</span>
<span class="t" style="left:253.60px;top:181.31px;font-size:16.5px;font-weight:400;color:#8a8a8a;">/</span>
<span class="t" style="left:59.80px;top:245.83px;font-size:16px;font-weight:400;color:#212121;">Dashboard</span>
<span class="t" style="left:60.80px;top:293.83px;font-size:16px;font-weight:400;color:#212121;">Accounts</span>
<span class="t" style="left:59.80px;top:341.83px;font-size:16px;font-weight:400;color:#212121;">Balances</span>
<span class="t" style="left:59.80px;top:389.83px;font-size:16px;font-weight:400;color:#212121;">History</span>
<span class="t" style="left:60.30px;top:437.83px;font-size:16px;font-weight:400;color:#212121;">Onchain</span>
<span class="t" style="left:59.80px;top:485.83px;font-size:16px;font-weight:400;color:#212121;">Staking</span>
<span class="t" style="left:59.80px;top:533.83px;font-size:16px;font-weight:400;color:#212121;">Statistics</span>
<span class="t" style="left:59.80px;top:581.83px;font-size:16px;font-weight:400;color:#212121;">Profit and Loss Report</span>
<span class="t" style="left:60.80px;top:629.83px;font-size:16px;font-weight:400;color:#212121;">Airdrops</span>
<span class="t" style="left:59.80px;top:677.83px;font-size:16px;font-weight:400;color:#212121;">NFTs Gallery</span>
<span class="t" style="left:60.80px;top:743.23px;font-size:16px;font-weight:400;color:#212121;">Tag Manager</span>
<span class="t" style="left:59.80px;top:790.73px;font-size:16px;font-weight:400;color:#212121;">Manage Assets</span>
<span class="t" style="left:59.80px;top:838.43px;font-size:16px;font-weight:400;color:#212121;">Manage Prices</span>
<span class="t" style="left:59.80px;top:886.43px;font-size:16px;font-weight:400;color:#212121;">Manage Address Book</span>
<span class="t" style="left:132.60px;top:919.62px;font-size:12px;font-weight:400;color:#333;letter-spacing:-0.020px;z-index:6;">1.41.0</span>
<span class="t" style="left:332.33px;top:91.65px;font-size:24px;font-weight:700;color:#212121;transform:scaleX(0.9433);transform-origin:0 0;">Settings</span>
<span class="t" style="left:376.30px;top:157.33px;font-size:14px;font-weight:400;color:#666666;letter-spacing:0.083px;-webkit-text-stroke:0.3px #666666;">Account</span>
<span class="t" style="left:488.30px;top:157.33px;font-size:14px;font-weight:400;color:#666666;letter-spacing:-0.267px;-webkit-text-stroke:0.3px #666666;">General</span>
<span class="t" style="left:594.70px;top:157.33px;font-size:14px;font-weight:400;color:#666666;letter-spacing:0.057px;-webkit-text-stroke:0.3px #666666;">Database</span>
<span class="t" style="left:715.70px;top:157.33px;font-size:14px;font-weight:400;color:#4e5ba6;letter-spacing:0.267px;-webkit-text-stroke:0.3px #4e5ba6;">Accounting</span>
<span class="t" style="left:846.50px;top:157.33px;font-size:14px;font-weight:400;color:#666666;-webkit-text-stroke:0.3px #666666;">Oracles</span>
<span class="t" style="left:953.00px;top:157.33px;font-size:14px;font-weight:400;color:#666666;letter-spacing:-0.188px;-webkit-text-stroke:0.3px #666666;">RPC Nodes</span>
<span class="t" style="left:1084.00px;top:157.33px;font-size:14px;font-weight:400;color:#666666;letter-spacing:0.500px;-webkit-text-stroke:0.3px #666666;">Modules</span>
<span class="t" style="left:1198.00px;top:157.33px;font-size:14px;font-weight:400;color:#666666;letter-spacing:0.308px;-webkit-text-stroke:0.3px #666666;">Interface-only</span>
<span class="t" style="left:333.00px;top:215.69px;font-size:20px;font-weight:400;color:#212121;letter-spacing:-0.013px;-webkit-text-stroke:0.5px #212121;">Accounting Rules</span>
<span class="t" style="left:331.50px;top:244.43px;font-size:14px;font-weight:400;color:#666666;letter-spacing:-0.036px;">Manage and view your event accounting rules</span>
<span class="t" style="left:1117.50px;top:228.63px;font-size:14px;font-weight:400;color:#4e5ba6;letter-spacing:-0.050px;-webkit-text-stroke:0.3px #4e5ba6;">Refresh</span>
<span class="t" style="left:1238.70px;top:228.73px;font-size:14px;font-weight:400;color:#fff;letter-spacing:0.078px;-webkit-text-stroke:0.3px #fff;">Add accounting rule</span>
<span class="t" style="left:365.60px;top:333.58px;font-size:14px;font-weight:400;color:#666666;letter-spacing:-0.183px;-webkit-text-stroke:0.3px #666666;">Regular Rules</span>
<span class="t" style="left:484.00px;top:333.58px;font-size:14px;font-weight:400;color:#4e5ba6;letter-spacing:0.081px;-webkit-text-stroke:0.3px #4e5ba6;">Special rules for certain events</span>
<span class="t" style="left:1019.30px;top:332.73px;font-size:16px;font-weight:400;color:#666666;letter-spacing:0.047px;">Combined filters</span>
<span class="t" style="left:882.10px;top:396.72px;font-size:12px;font-weight:400;color:#666666;letter-spacing:-0.100px;">Rows per page:</span>
<span class="t" style="left:984.20px;top:396.72px;font-size:12px;font-weight:400;color:#212121;letter-spacing:0.100px;">10</span>
<span class="t" style="left:1045.60px;top:396.72px;font-size:12px;font-weight:400;color:#666666;letter-spacing:0.183px;">Items #</span>
<span class="t" style="left:1106.50px;top:396.72px;font-size:12px;font-weight:400;color:#212121;letter-spacing:-0.575px;">1 - 1</span>
<span class="t" style="left:1168.80px;top:396.72px;font-size:12px;font-weight:400;color:#212121;letter-spacing:0.233px;">of 1</span>
<span class="t" style="left:882.10px;top:631.72px;font-size:12px;font-weight:400;color:#666666;letter-spacing:-0.100px;">Rows per page:</span>
<span class="t" style="left:984.20px;top:631.72px;font-size:12px;font-weight:400;color:#212121;letter-spacing:0.100px;">10</span>
<span class="t" style="left:1045.60px;top:631.72px;font-size:12px;font-weight:400;color:#666666;letter-spacing:0.183px;">Items #</span>
<span class="t" style="left:1106.50px;top:631.72px;font-size:12px;font-weight:400;color:#212121;letter-spacing:-0.575px;">1 - 1</span>
<span class="t" style="left:1168.80px;top:631.72px;font-size:12px;font-weight:400;color:#212121;letter-spacing:0.233px;">of 1</span>
<span class="t" style="left:365.90px;top:464.68px;font-size:14px;font-weight:400;color:#212121;letter-spacing:-0.200px;-webkit-text-stroke:0.35px #212121;">Event Type -</span>
<span class="t" style="left:365.90px;top:489.63px;font-size:14px;font-weight:400;color:#212121;letter-spacing:-0.223px;-webkit-text-stroke:0.35px #212121;">Event Sub Type</span>
<span class="t" style="left:493.40px;top:477.13px;font-size:14px;font-weight:400;color:#212121;letter-spacing:0.115px;-webkit-text-stroke:0.35px #212121;">Resulting Combination</span>
<span class="t" style="left:669.30px;top:477.13px;font-size:14px;font-weight:400;color:#212121;letter-spacing:0.118px;-webkit-text-stroke:0.35px #212121;">Counterparty</span>
<span class="t" style="left:783.80px;top:477.13px;font-size:14px;font-weight:400;color:#212121;letter-spacing:-0.237px;-webkit-text-stroke:0.35px #212121;">Event IDs</span>
<span class="t" style="left:945.40px;top:476.93px;font-size:14px;font-weight:400;color:#212121;-webkit-text-stroke:0.35px #212121;">Taxable</span>
<span class="t" style="left:1041.10px;top:446.63px;font-size:14px;font-weight:400;color:#212121;-webkit-text-stroke:0.35px #212121;">Count</span>
<span class="t" style="left:1040.60px;top:466.60px;font-size:14px;font-weight:400;color:#212121;-webkit-text-stroke:0.35px #212121;">Entire</span>
<span class="t" style="left:1041.60px;top:486.57px;font-size:14px;font-weight:400;color:#212121;-webkit-text-stroke:0.35px #212121;">Amount</span>
<span class="t" style="left:1041.10px;top:506.54px;font-size:14px;font-weight:400;color:#212121;-webkit-text-stroke:0.35px #212121;">Spend</span>
<span class="t" style="left:1137.20px;top:446.63px;font-size:14px;font-weight:400;color:#212121;-webkit-text-stroke:0.35px #212121;">Count</span>
<span class="t" style="left:1137.20px;top:466.60px;font-size:14px;font-weight:400;color:#212121;-webkit-text-stroke:0.35px #212121;">Cost</span>
<span class="t" style="left:1136.70px;top:486.57px;font-size:14px;font-weight:400;color:#212121;-webkit-text-stroke:0.35px #212121;">Basis</span>
<span class="t" style="left:1136.70px;top:506.54px;font-size:14px;font-weight:400;color:#212121;-webkit-text-stroke:0.35px #212121;">PnL</span>
<span class="t" style="left:1208.60px;top:466.53px;font-size:14px;font-weight:400;color:#212121;letter-spacing:0.289px;-webkit-text-stroke:0.35px #212121;">Accounting</span>
<span class="t" style="left:1208.60px;top:486.63px;font-size:14px;font-weight:400;color:#212121;-webkit-text-stroke:0.35px #212121;">Treatment</span>
<span class="t" style="left:1323.60px;top:476.93px;font-size:14px;font-weight:400;color:#212121;letter-spacing:0.350px;-webkit-text-stroke:0.35px #212121;">Actions</span>
<span class="t" style="left:365.80px;top:559.73px;font-size:14px;font-weight:400;color:#212121;letter-spacing:-0.363px;">Receive -</span>
<span class="t" style="left:365.80px;top:579.63px;font-size:14px;font-weight:400;color:#212121;">None</span>
<span class="t" style="left:545.79px;top:569.73px;font-size:14px;font-weight:700;color:#212121;transform:scaleX(0.9067);transform-origin:0 0;">RECEIVE</span>
<span class="t" style="left:669.40px;top:569.73px;font-size:14px;font-weight:400;color:#212121;">-</span>
<span class="t" style="left:784.30px;top:569.73px;font-size:14px;font-weight:400;color:#212121;letter-spacing:-0.186px;">2 Events</span>
<span class="t" style="left:1208.10px;top:569.73px;font-size:14px;font-weight:400;color:#212121;">-</span>
<span class="t" style="left:332.50px;top:732.78px;font-size:16px;font-weight:400;color:#212121;letter-spacing:-0.046px;-webkit-text-stroke:0.45px #212121;">Trade Settings</span>
<span class="t" style="left:767.40px;top:732.83px;font-size:16px;font-weight:400;color:#212121;letter-spacing:0.053px;">Take into account crypto to crypto trades</span>
<span class="t" style="left:767.40px;top:780.83px;font-size:16px;font-weight:400;color:#212121;letter-spacing:0.011px;">Take into account Ethereum gas costs</span>
<span class="t" style="left:765.90px;top:828.83px;font-size:16px;font-weight:400;color:#212121;letter-spacing:-0.081px;">Is there a tax free period?</span>
<span class="t" style="left:732.20px;top:882.87px;font-size:12px;font-weight:400;color:#666666;letter-spacing:-0.022px;">Tax free after how many days</span>
<span class="t" style="left:727.90px;top:909.08px;font-size:16px;font-weight:400;color:#212121;letter-spacing:0.300px;">365</span>
</body></html>
